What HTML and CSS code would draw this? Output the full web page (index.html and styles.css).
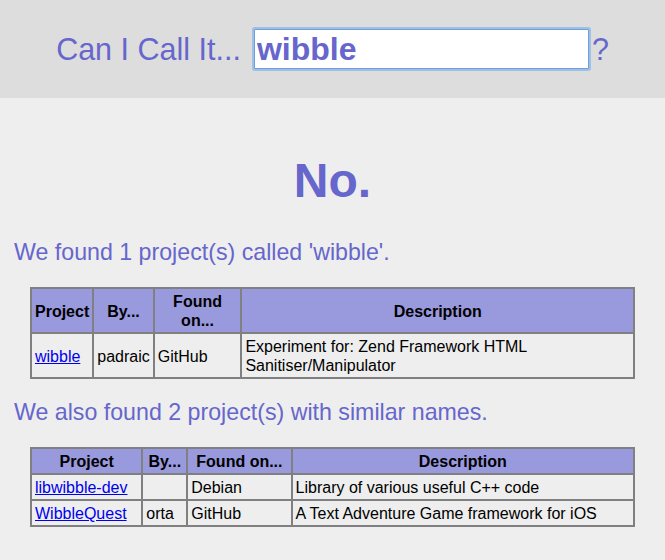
FILE: index.html
```html
<!DOCTYPE html>
<html>
<head>
<meta charset="utf-8">
<title>Can I Call It...</title>
<link rel="stylesheet" href="styles.css">
</head>
<body>
<header class="top">
  <form class="ask">
    <label class="ask-label" for="q">Can I Call It...</label>
    <input class="ask-input" id="q" type="text" value="wibble">
    <span class="ask-q">?</span>
  </form>
</header>
<main class="results">
  <h1 class="verdict">No.</h1>
  <h2 class="found">We found 1 project(s) called 'wibble'.</h2>
  <table class="projects">
    <thead>
      <tr><th>Project</th><th>By...</th><th>Found on...</th><th>Description</th></tr>
    </thead>
    <tbody>
      <tr><td><a href="#">wibble</a></td><td>padraic</td><td>GitHub</td><td>Experiment for: Zend Framework HTML Sanitiser/Manipulator</td></tr>
    </tbody>
  </table>
  <h2 class="found">We also found 2 project(s) with similar names.</h2>
  <table class="projects">
    <thead>
      <tr><th>Project</th><th>By...</th><th>Found on...</th><th>Description</th></tr>
    </thead>
    <tbody>
      <tr><td><a href="#">libwibble-dev</a></td><td></td><td>Debian</td><td>Library of various useful C++ code</td></tr>
      <tr><td><a href="#">WibbleQuest</a></td><td>orta</td><td>GitHub</td><td>A Text Adventure Game framework for iOS</td></tr>
    </tbody>
  </table>
</main>
</body>
</html>
```
FILE: styles.css
```css
html, body {
  margin: 0;
  padding: 0;
  background: #eeeeee;
  font-family: "Liberation Sans", Arial, Helvetica, sans-serif;
  color: #000;
}

.top {
  background: #dddddd;
  height: 98px;
  display: flex;
  align-items: center;
  justify-content: center;
}

.ask {
  display: flex;
  align-items: center;
  margin: 0;
}

.ask-label {
  font-size: 30.5px;
  color: #6666cc;
  margin-right: 13px;
}

.ask-input {
  width: 329px;
  height: 38px;
  box-sizing: content-box;
  padding: 0 2px;
  border: 1px solid #6f9fd8;
  box-shadow: 0 0 0 2px #9dc0e8;
  border-radius: 1px;
  background: #fff;
  font-family: "Liberation Sans", Arial, sans-serif;
  font-size: 32px;
  font-weight: bold;
  color: #6666cc;
  outline: none;
}

.ask-q {
  font-size: 30.5px;
  color: #6666cc;
  margin-left: 3px;
}

.results {
  padding: 55px 14px 20px;
}

.verdict {
  margin: 0;
  text-align: center;
  font-size: 48px;
  font-weight: bold;
  color: #6666cc;
}

.found {
  margin: 31px 0 21px;
  font-size: 23.2px;
  font-weight: normal;
  color: #6666cc;
}

.projects + .found {
  margin-top: 20px;
}

.projects {
  width: 605px;
  margin: 0 auto;
  border-collapse: collapse;
  border: 2px solid #808080;
  font-size: 16px;
}

.projects th,
.projects td {
  border: 2px solid #808080;
  padding: 3px 3px 2px;
  line-height: 19px;
  vertical-align: middle;
}

.projects th {
  background: #9999dd;
  font-weight: bold;
  text-align: center;
}

.projects td {
  text-align: left;
}

.projects a {
  color: #0000ee;
}
```
